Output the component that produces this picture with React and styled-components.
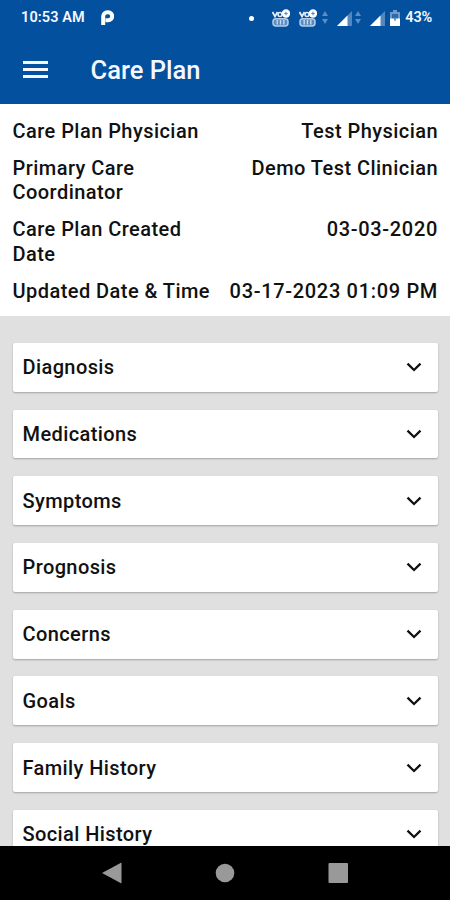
import styled, { createGlobalStyle } from "styled-components";

const GlobalStyle = createGlobalStyle`
  * {
    box-sizing: border-box;
  }

  body {
    margin: 0;
    font-family: Roboto, sans-serif;
    font-weight: 500;
    color: #111;
  }
`;

const Screen = styled.div`
  width: 450px;
  height: 900px;
  display: flex;
  flex-direction: column;
  overflow: hidden;
  background: #e0e0e0;
`;

const Header = styled.header`
  flex: none;
  height: 104px;
  background: #03509f;
  color: #f6f8ff;
`;

const StatusBar = styled.div`
  height: 36px;
  padding: 0 18px 0 21px;
  display: flex;
  align-items: center;
  justify-content: space-between;
`;

const StatusGroup = styled.div`
  display: flex;
  align-items: center;
  gap: ${(props) => props.$gap}px;
`;

const StatusText = styled.span`
  font-size: 14.5px;
  font-weight: 600;
  line-height: 18px;
  letter-spacing: ${(props) => props.$spacing || "0"};
`;

const Dot = styled.span`
  width: 5px;
  height: 5px;
  margin-right: 9px;
  border-radius: 50%;
  background: #fff;
`;

const Toolbar = styled.div`
  height: 68px;
  padding: 0 23px;
  display: flex;
  align-items: center;
  gap: 41.5px;
`;

const MenuButton = styled.button`
  width: 26px;
  height: 20px;
  padding: 0;
  border: 0;
  background: none;
  display: flex;
  flex-direction: column;
  justify-content: center;
  gap: 4px;
  transform: translateY(-1px);
`;

const MenuLine = styled.span`
  width: 25px;
  height: 3px;
  background: #f6f6ff;
`;

const Title = styled.h1`
  margin: 0;
  font-size: 25.5px;
  font-weight: 500;
  line-height: 32px;
  letter-spacing: 0;
`;

const Summary = styled.section`
  flex: none;
  height: 212px;
  padding: 15.3px 12px 0 12.5px;
  display: flex;
  flex-direction: column;
  gap: 12.6px;
  background: #fff;
`;

const SummaryRow = styled.div`
  display: flex;
  justify-content: space-between;
  font-size: 20px;
  line-height: 24.3px;
`;

const Label = styled.span`
  width: 205px;
  padding-right: ${(props) => (props.$narrow ? "20px" : "0")};
  letter-spacing: 0.45px;
`;

const Value = styled.span`
  letter-spacing: ${(props) => (props.$numeric ? "0.68px" : "0.45px")};
  white-space: nowrap;
`;

const List = styled.main`
  flex: 1;
  min-height: 0;
  overflow: hidden;
  padding: 27px 12px 0 12.5px;
  display: flex;
  flex-direction: column;
  gap: 17.9px;
`;

const Card = styled.div`
  flex: none;
  height: 48.8px;
  padding: 0 15px 0 10px;
  display: flex;
  align-items: center;
  justify-content: space-between;
  background: #fff;
  border-radius: 2px;
  box-shadow: 0 1px 2px rgba(0, 0, 0, 0.28);
  font-size: 20px;
  letter-spacing: 0.4px;
`;

const NavBar = styled.nav`
  flex: none;
  height: 54px;
  padding: 0 101px;
  display: flex;
  align-items: center;
  justify-content: space-between;
  background: #000;
`;

const rows = [
  { label: "Care Plan Physician", value: "Test Physician" },
  { label: "Primary Care Coordinator", value: "Demo Test Clinician", narrow: true },
  { label: "Care Plan Created Date", value: "03-03-2020", narrow: true, numeric: true },
  { label: "Updated Date & Time", value: "03-17-2023 01:09 PM", numeric: true },
];

const sections = [
  "Diagnosis",
  "Medications",
  "Symptoms",
  "Prognosis",
  "Concerns",
  "Goals",
  "Family History",
  "Social History",
];

function AppBadgeIcon() {
  return (
    <svg width="13" height="16" viewBox="0 0 13 16" fill="none">
      <path
        d="M2.200 15V6.500A4.300 4.300 0 0 1 6.500 2.200H7.200A3.400 3.400 0 0 1 7.200 10.200H4.500"
        stroke="#fff"
        strokeWidth="4"
      />
    </svg>
  );
}

function VolteIcon() {
  return (
    <svg width="18" height="18" viewBox="0 0 18 18" fill="none">
      <path d="M0.500 3L3 7.500L5.500 3" stroke="#e4edf8" strokeWidth="1.800" />
      <circle cx="8" cy="5.500" r="2" stroke="#e4edf8" strokeWidth="1.600" />
      <circle cx="14" cy="4.500" r="4.200" fill="#fff" />
      <path d="M14 2.800v3.400M12.300 4.500h3.400" stroke="#5b8cc0" strokeWidth="1.200" />
      <rect x="1" y="9.800" width="15" height="7.200" rx="3" fill="#5a8cc3" stroke="#b7cde6" strokeWidth="1.500" />
      <path d="M5.200 11v4.500M8.500 11v4.500M11.800 11v4.500" stroke="#c6d8ec" strokeWidth="1.400" />
    </svg>
  );
}

function DataArrows() {
  return (
    <svg width="6" height="16" viewBox="0 0 6 16" fill="#5d8dbf">
      <path d="M3 1l3 5H0zM3 14L0 9h6z" />
    </svg>
  );
}

function SignalIcon() {
  return (
    <svg width="15" height="15" viewBox="0 0 15 15">
      <path d="M0 15L15 0V15z" fill="#5388be" />
      <path d="M0 15L10.500 4.500V15z" fill="#fff" />
    </svg>
  );
}

function BatteryIcon() {
  return (
    <svg width="10" height="16" viewBox="0 0 10 16" fill="none">
      <path d="M3 0h4v2h3v14H0V2h3z" fill="#6f9acb" />
      <path d="M2 4h6v5H2z" fill="#2c69ad" />
      <path d="M0 8.500h10V16H0z" fill="#fff" />
      <path d="M3.500 8.500h3L5 11.500z" fill="#5b8cc0" />
    </svg>
  );
}

function Chevron() {
  return (
    <svg width="18" height="14" viewBox="0 0 18 14" fill="none">
      <path d="M2.500 3.700L9 10L15.500 3.700" stroke="#111" strokeWidth="2.300" />
    </svg>
  );
}

function App() {
  return (
    <>
      <GlobalStyle />
      <Screen>
        <Header>
          <StatusBar>
            <StatusGroup $gap={16}>
              <StatusText $spacing="0.1px">10:53 AM</StatusText>
              <AppBadgeIcon />
            </StatusGroup>
            <StatusGroup $gap={9}>
              <Dot />
              <VolteIcon />
              <StatusGroup $gap={5}>
                <VolteIcon />
                <DataArrows />
              </StatusGroup>
              <StatusGroup $gap={3}>
                <SignalIcon />
                <DataArrows />
              </StatusGroup>
              <StatusGroup $gap={5}>
                <SignalIcon />
                <BatteryIcon />
                <StatusText $spacing="-0.2px">43%</StatusText>
              </StatusGroup>
            </StatusGroup>
          </StatusBar>
          <Toolbar>
            <MenuButton aria-label="Menu">
              <MenuLine />
              <MenuLine />
              <MenuLine />
            </MenuButton>
            <Title>Care Plan</Title>
          </Toolbar>
        </Header>
        <Summary>
          {rows.map((row) => (
            <SummaryRow key={row.label}>
              <Label $narrow={row.narrow}>{row.label}</Label>
              <Value $numeric={row.numeric}>{row.value}</Value>
            </SummaryRow>
          ))}
        </Summary>
        <List>
          {sections.map((name) => (
            <Card key={name}>
              {name}
              <Chevron />
            </Card>
          ))}
        </List>
        <NavBar>
          <svg width="21" height="22" viewBox="0 0 21 22">
            <path d="M1 11L20.500 0.500V21.500z" fill="#999" />
          </svg>
          <svg width="20" height="20" viewBox="0 0 20 20">
            <circle cx="10" cy="10" r="9.300" fill="#999" />
          </svg>
          <svg width="21" height="20" viewBox="0 0 21 20">
            <rect x="0.500" width="19.500" height="20" rx="1" fill="#999" />
          </svg>
        </NavBar>
      </Screen>
    </>
  );
}

export default App;
